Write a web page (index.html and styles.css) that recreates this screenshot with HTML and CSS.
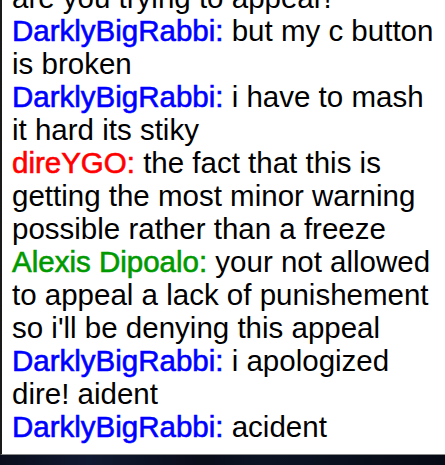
FILE: index.html
```html
<!DOCTYPE html>
<html>
<head>
<meta charset="utf-8">
<link rel="stylesheet" href="styles.css">
</head>
<body>
<div class="chat">
  <div class="log">
    <div class="msg">are you trying to appear!</div>
    <div class="msg"><span class="name blue">DarklyBigRabbi:</span> but my c button is broken</div>
    <div class="msg"><span class="name blue">DarklyBigRabbi:</span> i have to mash it hard its stiky</div>
    <div class="msg"><span class="name red">direYGO:</span> the fact that this is getting the most minor warning possible rather than a freeze</div>
    <div class="msg"><span class="name green">Alexis Dipoalo:</span> your not allowed to appeal a lack of punishement so i'll be denying this appeal</div>
    <div class="msg"><span class="name blue">DarklyBigRabbi:</span> i apologized dire! aident</div>
    <div class="msg"><span class="name blue">DarklyBigRabbi:</span> acident</div>
  </div>
</div>
</body>
</html>
```
FILE: styles.css
```css
html, body {
  margin: 0;
  padding: 0;
}
body {
  width: 445px;
  height: 465px;
  overflow: hidden;
  background: linear-gradient(90deg, #0a0e1c 0%, #111a33 20%, #0a0d1a 45%, #0c1424 60%, #070a14 100%);
}
.chat {
  box-sizing: border-box;
  height: 455px;
  background: #ffffff;
  border-left: 2px solid #1a1a1a;
  border-bottom: 1px solid #8a8a8a;
  display: flex;
  flex-direction: column;
  justify-content: flex-end;
  overflow: hidden;
}
.log {
  padding: 0 8px 11px 10px;
  font-family: "Liberation Sans", Arial, sans-serif;
  font-size: 29.5px;
  line-height: 33px;
  color: #000;
}
.name {
  -webkit-text-stroke: 0.6px currentColor;
}
.blue { color: #0000ff; }
.red { color: #ff0000; }
.green { color: #009900; }
```
